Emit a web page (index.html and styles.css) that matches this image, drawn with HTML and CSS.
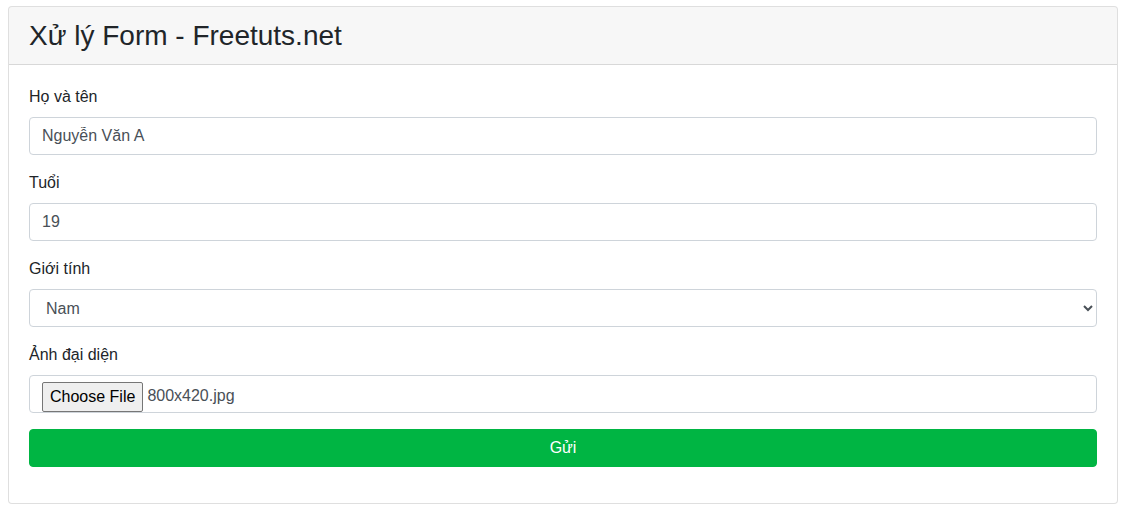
FILE: index.html
```html
<!DOCTYPE html>
<html lang="vi">
<head>
<meta charset="utf-8">
<title>Xử lý Form - Freetuts.net</title>
<link rel="stylesheet" href="styles.css">
</head>
<body>
<div class="card">
  <div class="card-header"><h3 class="title">Xử lý Form - Freetuts.net</h3></div>
  <div class="card-body">
    <form class="form">
      <div class="form-group">
        <label class="label" for="name">Họ và tên</label>
        <input class="form-control" id="name" type="text" value="Nguyễn Văn A">
      </div>
      <div class="form-group">
        <label class="label" for="age">Tuổi</label>
        <input class="form-control" id="age" type="text" value="19">
      </div>
      <div class="form-group">
        <label class="label" for="gender">Giới tính</label>
        <select class="form-control select" id="gender">
          <option>Nam</option>
          <option>Nữ</option>
        </select>
      </div>
      <div class="form-group">
        <label class="label">Ảnh đại diện</label>
        <div class="form-control file-control">
          <span class="file-btn">Choose File</span>
          <span class="file-name">800x420.jpg</span>
        </div>
      </div>
      <button type="button" class="btn-submit">Gửi</button>
    </form>
  </div>
</div>
</body>
</html>
```
FILE: styles.css
```css
* { box-sizing: border-box; }
body {
  margin: 6px 9px 8px 8px;
  font-family: "Liberation Sans", Arial, sans-serif;
  font-size: 16px;
  line-height: 1.5;
  color: #212529;
  background: #fff;
}
.card {
  border: 1px solid rgba(0,0,0,.125);
  border-radius: 4px;
  background: #fff;
}
.card-header {
  padding: 12px 20px;
  background: rgba(0,0,0,.03);
  border-bottom: 1px solid rgba(0,0,0,.125);
  border-radius: 3px 3px 0 0;
}
.title {
  margin: 0;
  font-size: 28px;
  font-weight: 400;
  line-height: 33px;
}
.card-body {
  padding: 20px;
}
.form { margin: 0; }
.form-group { margin-bottom: 16px; }
.label {
  display: block;
  margin-bottom: 8px;
}
.form-control {
  display: block;
  width: 100%;
  height: 38px;
  padding: 6px 12px;
  font-family: inherit;
  font-size: 16px;
  line-height: 1.5;
  color: #495057;
  background: #fff;
  border: 1px solid #ced4da;
  border-radius: 4px;
  margin: 0;
}
.select { padding: 6px 12px; }
.file-control {
  display: flex;
  align-items: flex-start;
  padding: 0 12px;
}
.file-btn {
  font-size: 16px;
  line-height: 1;
  color: #000;
  background: #efefef;
  border: 1px solid #767676;
  border-radius: 2px;
  padding: 0 7px;
  height: 30px;
  display: flex;
  align-items: center;
  margin-right: 4px;
  margin-top: 6px;
}
.file-name {
  color: #495057;
  line-height: 24px;
  margin-top: 8px;
}
.btn-submit {
  display: block;
  width: 100%;
  height: 38px;
  margin: 0 0 16px;
  border: 1px solid #00b543;
  border-radius: 4px;
  background: #00b543;
  color: #fff;
  font-family: inherit;
  font-size: 16px;
  line-height: 1.5;
  padding: 6px 12px;
}
```
